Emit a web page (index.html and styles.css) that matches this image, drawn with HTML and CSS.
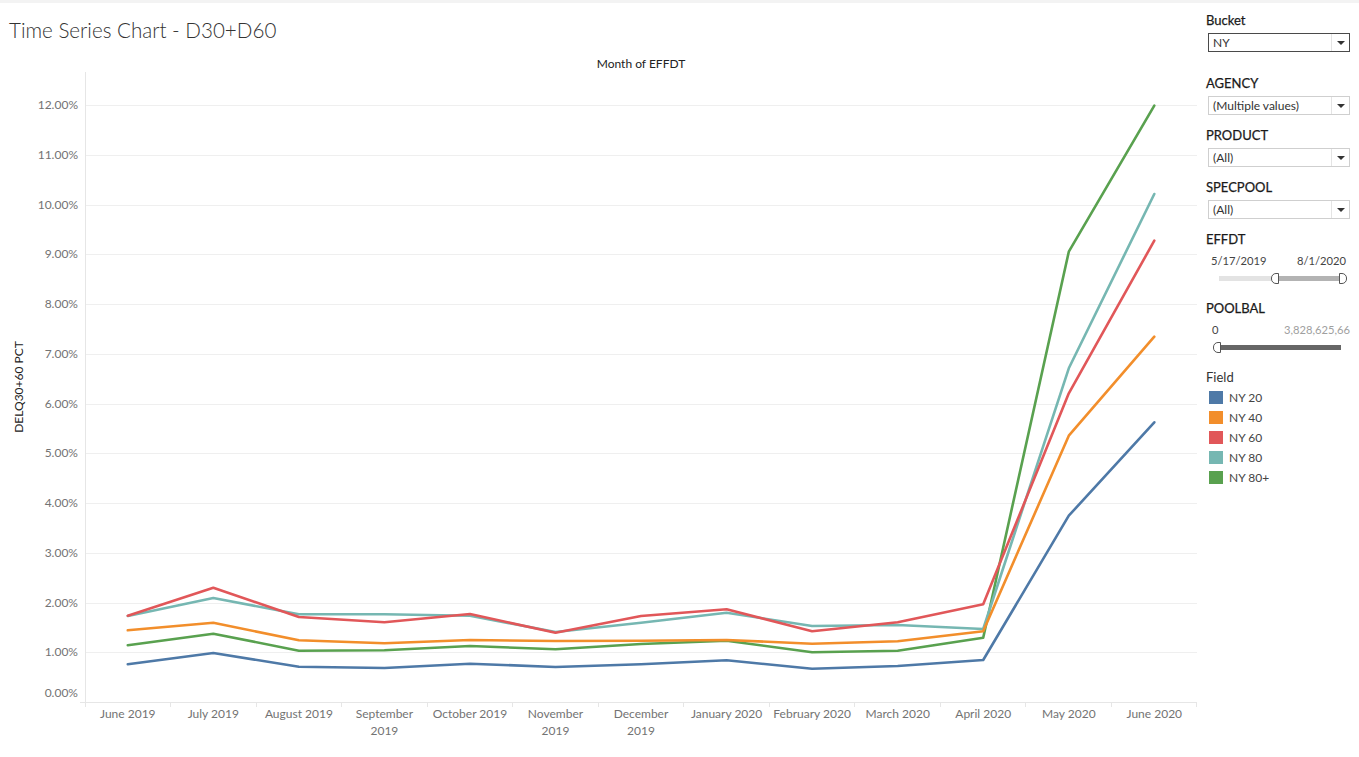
FILE: index.html
```html
<!DOCTYPE html>
<html lang="en">
<head>
<meta charset="utf-8">
<title>Time Series Chart - D30+D60</title>
<link rel="stylesheet" href="styles.css">
</head>
<body>
<div class="topstrip"></div>
<div class="dash">
  <main class="main">
    <h1 class="title">Time Series Chart - D30+D60</h1>
    <svg class="chart" viewBox="0 45 1200 712" width="1200" height="712" xmlns="http://www.w3.org/2000/svg">
      <text class="col-title" x="641" y="68" text-anchor="middle">Month of EFFDT</text>
      <text class="y-title" transform="translate(23 387) rotate(-90)" text-anchor="middle">DELQ30+60 PCT</text>

      <g class="grid">
        <line x1="85" x2="1197" y1="105.5" y2="105.5"/>
        <line x1="85" x2="1197" y1="155.5" y2="155.5"/>
        <line x1="85" x2="1197" y1="205.5" y2="205.5"/>
        <line x1="85" x2="1197" y1="254.5" y2="254.5"/>
        <line x1="85" x2="1197" y1="304.5" y2="304.5"/>
        <line x1="85" x2="1197" y1="354.5" y2="354.5"/>
        <line x1="85" x2="1197" y1="404.5" y2="404.5"/>
        <line x1="85" x2="1197" y1="453.5" y2="453.5"/>
        <line x1="85" x2="1197" y1="503.5" y2="503.5"/>
        <line x1="85" x2="1197" y1="553.5" y2="553.5"/>
        <line x1="85" x2="1197" y1="603.5" y2="603.5"/>
        <line x1="85" x2="1197" y1="652.5" y2="652.5"/>
      </g>

      <g class="axis">
        <line x1="85.5" x2="85.5" y1="72" y2="707"/>
        <line x1="80" x2="1197" y1="702.5" y2="702.5"/>
        <line x1="170.5" x2="170.5" y1="702" y2="707"/>
        <line x1="256.5" x2="256.5" y1="702" y2="707"/>
        <line x1="341.5" x2="341.5" y1="702" y2="707"/>
        <line x1="427.5" x2="427.5" y1="702" y2="707"/>
        <line x1="512.5" x2="512.5" y1="702" y2="707"/>
        <line x1="598.5" x2="598.5" y1="702" y2="707"/>
        <line x1="683.5" x2="683.5" y1="702" y2="707"/>
        <line x1="769.5" x2="769.5" y1="702" y2="707"/>
        <line x1="854.5" x2="854.5" y1="702" y2="707"/>
        <line x1="940.5" x2="940.5" y1="702" y2="707"/>
        <line x1="1025.5" x2="1025.5" y1="702" y2="707"/>
        <line x1="1111.5" x2="1111.5" y1="702" y2="707"/>
        <line x1="1196.5" x2="1196.5" y1="702" y2="707"/>
      </g>

      <g class="y-labels" text-anchor="end">
        <text x="78" y="109">12.00%</text>
        <text x="78" y="159">11.00%</text>
        <text x="78" y="209">10.00%</text>
        <text x="78" y="258">9.00%</text>
        <text x="78" y="308">8.00%</text>
        <text x="78" y="358">7.00%</text>
        <text x="78" y="408">6.00%</text>
        <text x="78" y="457">5.00%</text>
        <text x="78" y="507">4.00%</text>
        <text x="78" y="557">3.00%</text>
        <text x="78" y="607">2.00%</text>
        <text x="78" y="656">1.00%</text>
        <text x="78" y="697">0.00%</text>
      </g>

      <g class="x-labels" text-anchor="middle">
        <text x="127.8" y="718">June 2019</text>
        <text x="213.3" y="718">July 2019</text>
        <text x="298.9" y="718">August 2019</text>
        <text x="384.4" y="718">September</text>
        <text x="384.4" y="735">2019</text>
        <text x="470" y="718">October 2019</text>
        <text x="555.5" y="718">November</text>
        <text x="555.5" y="735">2019</text>
        <text x="641" y="718">December</text>
        <text x="641" y="735">2019</text>
        <text x="726.6" y="718">January 2020</text>
        <text x="812.1" y="718">February 2020</text>
        <text x="897.7" y="718">March 2020</text>
        <text x="983.2" y="718">April 2020</text>
        <text x="1068.8" y="718">May 2020</text>
        <text x="1154.3" y="718">June 2020</text>
      </g>

      <g class="series">
        <polyline class="s-green" points="127.8,645.3 213.3,633.7 298.9,650.7 384.4,650.3 470,646 555.5,649.3 641,644 726.6,640.7 812.1,652.3 897.7,650.7 983.2,637.7 1068.8,251.7 1154.3,105.7"/>
        <polyline class="s-teal" points="127.8,616 213.3,598 298.9,614.3 384.4,614.3 470,615.7 555.5,632 641,622.7 726.6,612.7 812.1,626 897.7,625 983.2,629 1068.8,368.3 1154.3,194"/>
        <polyline class="s-red" points="127.8,615.7 213.3,587.7 298.9,617 384.4,622.3 470,614 555.5,632.7 641,616 726.6,609.3 812.1,631.3 897.7,622.3 983.2,604.3 1068.8,393.3 1154.3,240.7"/>
        <polyline class="s-orange" points="127.8,630.3 213.3,622.7 298.9,640.3 384.4,643.3 470,640 555.5,641 641,640.7 726.6,640 812.1,643.7 897.7,641.3 983.2,631.3 1068.8,435.7 1154.3,336.7"/>
        <polyline class="s-blue" points="127.8,664.3 213.3,653 298.9,666.7 384.4,668 470,663.7 555.5,667 641,664.3 726.6,660.3 812.1,668.7 897.7,666 983.2,660 1068.8,515.7 1154.3,422.3"/>
      </g>
    </svg>
  </main>

  <aside class="side">
    <section class="filter filter-first">
      <div class="f-label">Bucket</div>
      <div class="dd dd-active">
        <span class="dd-val">NY</span>
        <span class="dd-btn"><span class="caret"></span></span>
      </div>
    </section>
    <section class="filter">
      <div class="f-label">AGENCY</div>
      <div class="dd">
        <span class="dd-val">(Multiple values)</span>
        <span class="dd-btn"><span class="caret"></span></span>
      </div>
    </section>
    <section class="filter">
      <div class="f-label">PRODUCT</div>
      <div class="dd">
        <span class="dd-val">(All)</span>
        <span class="dd-btn"><span class="caret"></span></span>
      </div>
    </section>
    <section class="filter">
      <div class="f-label">SPECPOOL</div>
      <div class="dd">
        <span class="dd-val">(All)</span>
        <span class="dd-btn"><span class="caret"></span></span>
      </div>
    </section>

    <section class="range">
      <div class="f-label">EFFDT</div>
      <div class="range-vals range-vals-date">
        <span>5/17/2019</span>
        <span>8/1/2020</span>
      </div>
      <div class="slider slider-date">
        <span class="trk trk-light trk-w52"></span>
        <span class="knob knob-l"></span>
        <span class="trk trk-mid trk-w60"></span>
        <span class="knob knob-r"></span>
      </div>
    </section>

    <section class="range">
      <div class="f-label">POOLBAL</div>
      <div class="range-vals range-vals-num">
        <span>0</span>
        <span class="muted">3,828,625,66</span>
      </div>
      <div class="slider slider-num">
        <span class="knob knob-l"></span>
        <span class="trk trk-dark trk-w120"></span>
      </div>
    </section>

    <section class="legend">
      <div class="leg-title">Field</div>
      <div class="leg-row"><span class="sw sw-blue"></span><span>NY 20</span></div>
      <div class="leg-row"><span class="sw sw-orange"></span><span>NY 40</span></div>
      <div class="leg-row"><span class="sw sw-red"></span><span>NY 60</span></div>
      <div class="leg-row"><span class="sw sw-teal"></span><span>NY 80</span></div>
      <div class="leg-row"><span class="sw sw-green"></span><span>NY 80+</span></div>
    </section>
  </aside>
</div>
</body>
</html>
```

FILE: styles.css
```css
* { box-sizing: border-box; }

html, body {
  margin: 0;
  padding: 0;
  background: #ffffff;
}

body {
  width: 1359px;
  height: 757px;
  overflow: hidden;
  font-family: Lato, "Liberation Sans", sans-serif;
  color: #333333;
}

.topstrip {
  height: 3px;
  background: #f3f3f3;
}

.dash {
  display: flex;
  height: 754px;
}

.main {
  width: 1200px;
  flex: none;
}

.title {
  margin: 0;
  height: 42px;
  padding: 17px 0 0 9px;
  font-size: 20.6px;
  line-height: 20px;
  font-weight: 300;
  color: #333333;
}

.chart {
  display: block;
}

.col-title {
  font-family: Lato, "Liberation Sans", sans-serif;
  font-size: 12px;
  font-weight: 400;
  fill: #222222;
}

.y-title {
  font-family: Lato, "Liberation Sans", sans-serif;
  font-size: 12px;
  font-weight: 400;
  fill: #222222;
}

.grid line {
  stroke: #efefef;
  stroke-width: 1;
}

.axis line {
  stroke: #e6e6e6;
  stroke-width: 1;
}

.y-labels text,
.x-labels text {
  font-family: Lato, "Liberation Sans", sans-serif;
  font-size: 12px;
  fill: #737373;
}

.series polyline {
  fill: none;
  stroke-width: 2.6;
  stroke-linejoin: round;
  stroke-linecap: round;
}

.s-blue { stroke: #4e79a7; }
.s-orange { stroke: #f28e2b; }
.s-red { stroke: #e15759; }
.s-teal { stroke: #76b7b2; }
.s-green { stroke: #59a14f; }

/* side panel */
.side {
  width: 159px;
  flex: none;
  padding: 9px 0 0 6px;
}

.filter {
  margin-bottom: 12px;
}

.filter-first {
  margin-bottom: 23px;
}

.f-label {
  height: 16px;
  line-height: 16px;
  font-size: 13px;
  font-weight: 400;
  color: #1a1a1a;
  -webkit-text-stroke: 0.25px #1a1a1a;
}

.dd {
  display: flex;
  align-items: stretch;
  width: 142px;
  height: 19px;
  margin: 5px 0 0 2px;
  border: 1px solid #cfcfcf;
  background: #ffffff;
}

.dd-active {
  border-color: #4a4a4a;
}

.dd-val {
  flex: 1;
  padding-left: 4px;
  font-size: 12px;
  line-height: 17px;
  color: #333333;
  white-space: nowrap;
  overflow: hidden;
}

.dd-btn {
  width: 18px;
  flex: none;
  display: flex;
  align-items: center;
  justify-content: center;
  border-left: 1px solid #e4e4e4;
}

.caret {
  width: 0;
  height: 0;
  border-left: 4px solid transparent;
  border-right: 4px solid transparent;
  border-top: 4px solid #333333;
}

.range {
  margin-bottom: 16px;
}

.range-vals {
  display: flex;
  justify-content: space-between;
  height: 16px;
  line-height: 16px;
  margin-top: 6px;
  font-size: 11.2px;
  color: #444444;
  white-space: nowrap;
}

.range-vals-date {
  width: 135px;
  margin-left: 5px;
}

.range-vals-num {
  width: 138px;
  margin-left: 6px;
}

.muted {
  color: #a0a0a0;
}

.slider {
  display: flex;
  align-items: center;
  height: 11px;
  margin-top: 4px;
}

.slider-date {
  margin-left: 13px;
}

.slider-num {
  margin-left: 7px;
}

.trk {
  height: 5px;
  flex: none;
}

.trk-light { background: #e3e3e3; }
.trk-mid { background: #b3b3b3; }
.trk-dark { background: #666666; height: 5px; }

.trk-w52 { width: 52px; }
.trk-w60 { width: 60px; }
.trk-w120 { width: 120px; }

.knob {
  width: 8px;
  height: 11px;
  flex: none;
  background: #ffffff;
  border: 1px solid #555555;
}

.knob-l {
  border-radius: 5px 0 0 5px;
}

.knob-r {
  border-radius: 0 5px 5px 0;
}

.legend {
  margin-top: 0;
}

.leg-title {
  height: 16px;
  line-height: 16px;
  font-size: 13px;
  color: #333333;
  margin-bottom: 2px;
}

.leg-row {
  display: flex;
  align-items: center;
  height: 20px;
  margin-left: 3px;
  font-size: 12px;
  color: #444444;
}

.sw {
  width: 14px;
  height: 13px;
  margin-right: 6px;
  flex: none;
}

.sw-blue { background: #4e79a7; }
.sw-orange { background: #f28e2b; }
.sw-red { background: #e15759; }
.sw-teal { background: #76b7b2; }
.sw-green { background: #59a14f; }
```
